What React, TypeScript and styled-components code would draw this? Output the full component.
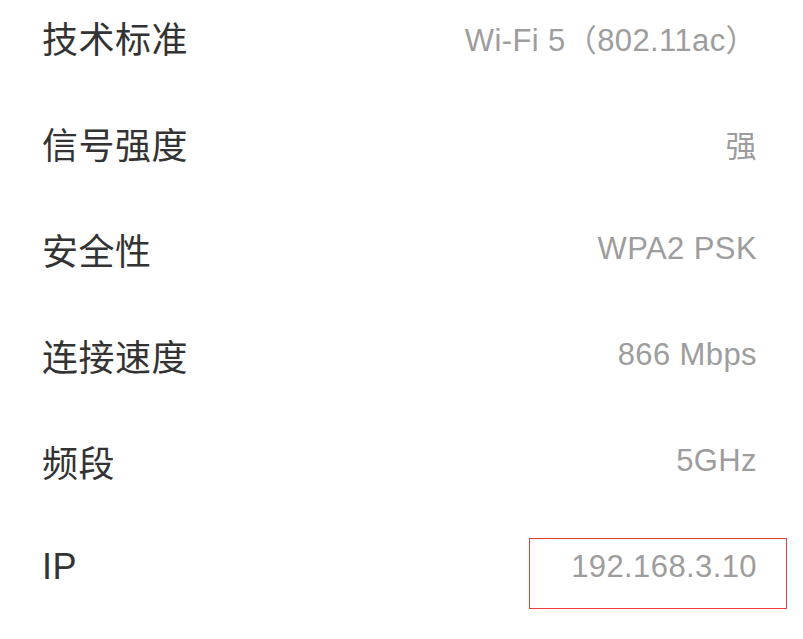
import React from 'react';
import styled, { createGlobalStyle } from 'styled-components';

const GlobalStyle = createGlobalStyle`
  html, body {
    margin: 0;
    padding: 0;
    background: #fff;
  }
  body {
    font-family: 'Liberation Sans', 'Noto Sans CJK SC', sans-serif;
    overflow: hidden;
  }
`;

const Page = styled.div`
  width: 803px;
  height: 639px;
  overflow: hidden;
  background: #fff;
`;

const List = styled.ul`
  list-style: none;
  margin: -16px 0 0;
  padding: 0;
`;

const Row = styled.li`
  position: relative;
  display: flex;
  align-items: center;
  justify-content: space-between;
  height: 106px;
  padding: 0 46px 0 42px;
`;

const Label = styled.span`
  font-size: 36px;
  color: #333;
  letter-spacing: 0.5px;
`;

const Value = styled.span`
  font-size: 31px;
  letter-spacing: 0.4px;
  color: #9d9d9d;
`;

// annotation box drawn over the highlighted value
const Highlight = styled.div`
  position: absolute;
  top: 24px;
  right: 16px;
  width: 258px;
  height: 71px;
  box-sizing: border-box;
  border: 1.5px solid #f03c3c;
  pointer-events: none;
`;

type Item = { label: string; value: string; marked?: boolean };

const items: Item[] = [
  { label: '技术标准', value: 'Wi-Fi 5（802.11ac）' },
  { label: '信号强度', value: '强' },
  { label: '安全性', value: 'WPA2 PSK' },
  { label: '连接速度', value: '866 Mbps' },
  { label: '频段', value: '5GHz' },
  { label: 'IP', value: '192.168.3.10', marked: true },
];

const App = (): JSX.Element => (
  <Page>
    <GlobalStyle />
    <List>
      {items.map((it) => (
        <Row key={it.label}>
          <Label>{it.label}</Label>
          <Value>{it.value}</Value>
          {it.marked && <Highlight />}
        </Row>
      ))}
    </List>
  </Page>
);

export default App;
